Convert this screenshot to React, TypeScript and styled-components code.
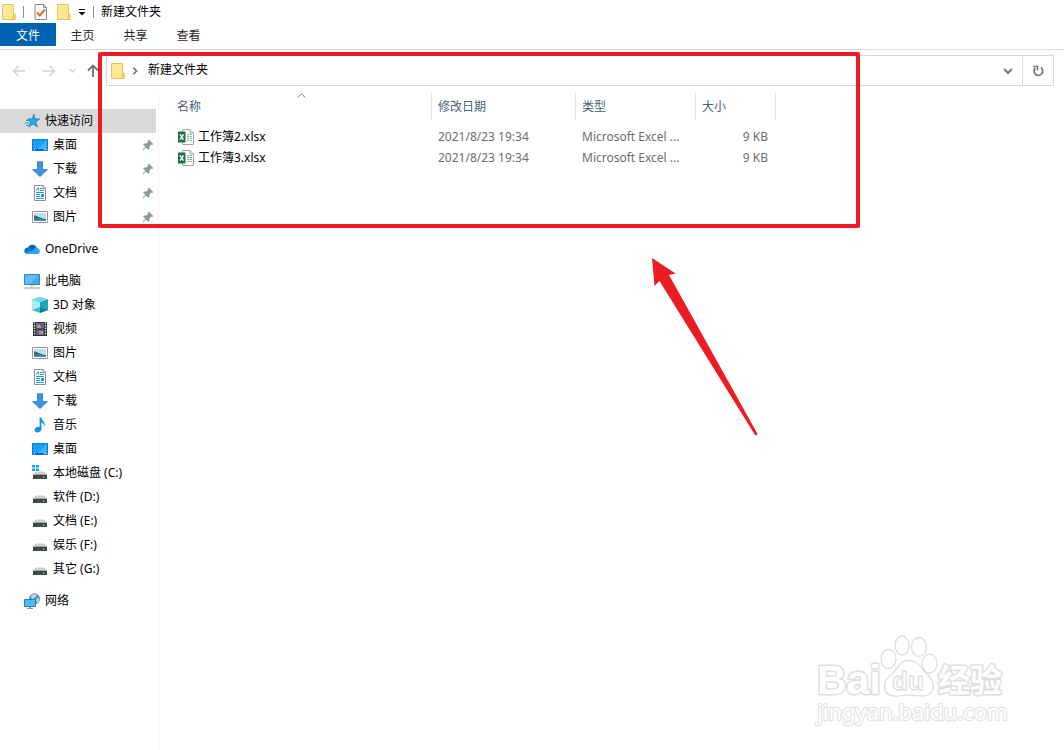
import React from "react";
import styled, { createGlobalStyle } from "styled-components";

const GlobalStyle = createGlobalStyle`
  * { box-sizing: border-box; }
  body {
    margin: 0;
    background: #fff;
    color: #000;
    font-family: "Noto Sans", "Noto Sans CJK SC", sans-serif;
    font-size: 12px;
    line-height: 16px;
  }
  button {
    font: inherit;
    color: inherit;
    border: 0;
    padding: 0;
    background: transparent;
  }
`;

const Page = styled.div`
  position: relative;
  min-height: 100vh;
  display: flex;
  flex-direction: column;
  overflow: hidden;
`;

const TitleBar = styled.header`
  display: flex;
  align-items: center;
  height: 23px;
  padding-left: 1px;
`;

const QuickButton = styled.button<{ $width: number }>`
  display: flex;
  align-items: center;
  justify-content: center;
  width: ${(p) => p.$width}px;
  height: 23px;
`;

const Divider = styled.span<{ $before: number; $after: number }>`
  width: 1px;
  height: 12px;
  margin: 0 ${(p) => p.$after}px 0 ${(p) => p.$before}px;
  background: #8c8c8c;
`;

const WindowTitle = styled.h1`
  margin: 0;
  font-size: 12px;
  font-weight: 400;
`;

const Ribbon = styled.nav`
  display: flex;
  height: 27px;
  border-bottom: 1px solid #dadbdc;
`;

const RibbonTab = styled.button<{ $primary?: boolean }>`
  width: ${(p) => (p.$primary ? 56 : 53)}px;
  height: 23px;
  padding-top: 2px;
  background: ${(p) => (p.$primary ? "#0063b1" : "transparent")};
  color: ${(p) => (p.$primary ? "#fff" : "#262626")};
`;

const AddressRow = styled.div`
  display: flex;
  align-items: center;
  padding: 5px 10px 0 4px;
`;

const NavButton = styled.button<{ $width: number }>`
  display: flex;
  align-items: center;
  justify-content: center;
  width: ${(p) => p.$width}px;
  height: 31px;
`;

const AddressBar = styled.div`
  display: flex;
  flex: 1;
  align-items: center;
  height: 31px;
  border: 1px solid #d9d9d9;
`;

const Crumbs = styled.div`
  display: flex;
  flex: 1;
  align-items: center;
  padding-left: 4px;
`;

const CrumbChevron = styled.span`
  display: flex;
  justify-content: center;
  width: 20px;
`;

const CrumbButton = styled.button`
  height: 29px;
  padding: 0 3px 1px 3px;
`;

const BarButton = styled.button<{ $bordered?: boolean }>`
  display: flex;
  align-items: center;
  justify-content: center;
  width: ${(p) => (p.$bordered ? 31 : 28)}px;
  height: 29px;
  border-left: ${(p) => (p.$bordered ? "1px solid #d9d9d9" : "0")};
`;

const Body = styled.div`
  display: flex;
  flex: 1;
  padding-top: 7px;
`;

const Sidebar = styled.nav`
  display: flex;
  flex-direction: column;
  gap: 8px;
  width: 159px;
  padding: 16px 2px 0 0;
  border-right: 1px solid #f3f3f3;
`;

const Group = styled.ul`
  margin: 0;
  padding: 0;
  list-style: none;
`;

const SideLink = styled.a<{ $level: number; $selected?: boolean }>`
  display: flex;
  align-items: center;
  gap: 5px;
  height: 24px;
  padding: 0 2px 0 ${(p) => (p.$level ? 32 : 24)}px;
  background: ${(p) => (p.$selected ? "#d9d9d9" : "transparent")};
  color: #000;
  text-decoration: none;
  white-space: nowrap;
`;

const SideLabel = styled.span`
  flex: 1;
`;

const Content = styled.main`
  flex: 1;
  min-width: 0;
  padding-left: 12px;
`;

const FileTable = styled.table`
  table-layout: fixed;
  width: 605px;
  border-collapse: separate;
  border-spacing: 0;
`;

const HeadCell = styled.th<{ $width: number }>`
  position: relative;
  width: ${(p) => p.$width}px;
  height: 27px;
  padding: 0 6px;
  border-right: 1px solid #e5e5e5;
  color: #4c607a;
  font-weight: 400;
  text-align: left;
`;

const SortMark = styled.span`
  position: absolute;
  top: -2px;
  left: 0;
  right: 0;
  display: flex;
  justify-content: center;
`;

const Cell = styled.td<{ $right?: boolean }>`
  height: 21px;
  padding: 0 8px 0 6px;
  color: #6d6d6d;
  text-align: ${(p) => (p.$right ? "right" : "left")};
  white-space: nowrap;
`;

const Spacer = styled.tbody`
  td { height: 6px; padding: 0; }
`;

const FileName = styled.a`
  display: flex;
  align-items: center;
  gap: 4px;
  padding-left: 1px;
  color: #000;
  text-decoration: none;
`;

const HighlightBox = styled.div`
  position: absolute;
  left: 98px;
  top: 52px;
  width: 762px;
  height: 176px;
  border: 4px solid #ed1c24;
  border-radius: 2px;
  pointer-events: none;
`;

const ArrowMark = styled.svg`
  position: absolute;
  left: 652px;
  top: 258px;
  pointer-events: none;
`;

const Watermark = styled.svg`
  position: absolute;
  right: 50px;
  bottom: 18px;
  pointer-events: none;
`;

const FolderIcon = () => (
  <svg width="14" height="16" viewBox="0 0 14 16" aria-hidden="true">
    <path d="M.5.5h11v9.5h1.5v5.500H.5z" fill="#ffe794" stroke="#e8c55a" />
    <path d="M11.500 10.500 10.500 15.500h2.500v-5z" fill="#f9d96f" stroke="#dfb743" strokeWidth=".7" />
  </svg>
);

const CheckPageIcon = () => (
  <svg width="14" height="16" viewBox="0 0 14 16" aria-hidden="true">
    <path d="M1 .5h8.500l3 3v12H1z" fill="#f8f9fa" stroke="#858a8e" />
    <path d="M9.500.500v3h3" fill="none" stroke="#858a8e" />
    <path d="M3 8.500 5.700 11.500 11 5.500" fill="none" stroke="#e8682c" strokeWidth="1.900" />
  </svg>
);

const CustomizeIcon = () => (
  <svg width="8" height="8" viewBox="0 0 8 8" aria-hidden="true">
    <path d="M1 1.500h6" stroke="#111" />
    <path d="M.5 4h7L4 7.500z" fill="#111" />
  </svg>
);

const ArrowIcon = ({ dir }: { dir: "left" | "right" | "up" }) => {
  const turn = { left: 0, right: 180, up: 90 }[dir];
  const up = dir === "up";
  return (
    <svg width="14" height="14" viewBox="0 0 14 14" aria-hidden="true">
      <path
        d="M13 7H1.800M6.500 2 1.500 7l5 5"
        transform={`rotate(${turn} 7 7)`}
        fill="none"
        stroke={up ? "#707070" : "#d2d2d2"}
        strokeWidth={up ? 1.800 : 1.500}
      />
    </svg>
  );
};

const Chevron = ({ d, color, size, weight }: { d: string; color: string; size: number; weight: number }) => (
  <svg width={size} height={size} viewBox="0 0 10 10" aria-hidden="true">
    <path d={d} fill="none" stroke={color} strokeWidth={weight} />
  </svg>
);
const DOWN = "M1 3l4 4 4-4";

const RefreshIcon = () => (
  <svg width="12" height="12" viewBox="0 0 12 12" aria-hidden="true">
    <path d="M8.900 2.600A4.300 4.300 0 1 1 3.300 3.100" fill="none" stroke="#777" strokeWidth="1.800" />
    <path d="M1.200 1.500h4.300v4" fill="none" stroke="#777" strokeWidth="1.600" />
  </svg>
);

const PinIcon = () => (
  <svg width="12" height="12" viewBox="0 0 12 12" aria-hidden="true">
    <path
      d="M7 .8 11.200 5l-1 .9-.8-.3L7.300 7.700l.1 2-1 1L4 8.400 1.300 11l-.6-.500L3.300 7.600 1 5.400l1-.9 2.200.1 2-2-.2-.9z"
      fill="#8a979f"
    />
  </svg>
);

const ExcelIcon = () => (
  <svg width="16" height="16" viewBox="0 0 16 16" aria-hidden="true">
    <path d="M4.500.500h7.500l3.500 3.500v11.500h-11z" fill="#fff" stroke="#a6a6a6" />
    <path d="M12 .5V4h3.500" fill="none" stroke="#a6a6a6" />
    <path d="M9 5.500h2M12 5.500h2M9 7.500h2M12 7.500h2M9 9.500h2M12 9.500h2M9 11.500h2M12 11.500h2" stroke="#7fb896" />
    <path d="M0 2.500h7.500v11H0z" fill="#1e7145" />
    <path d="M2 5.300 5.500 10.700M5.500 5.300 2 10.700" stroke="#fff" strokeWidth="1.400" />
  </svg>
);

type IconName =
  | "star" | "desktop" | "download" | "document" | "picture" | "cloud" | "pc"
  | "cube" | "video" | "music" | "system" | "drive" | "network";

const drivePaths = (
  <>
    <path d="M3.500 6.500h9L14.500 10H1.500z" fill="#cfd2d5" />
    <path d="M1 10h14v4H1z" fill="#414447" />
    <path d="M1 9.500h14" stroke="#a5a8aa" />
    <path d="M11 11.500h1.500v1.500H11z" fill="#53e04b" />
  </>
);

const glyphs: Record<IconName, React.ReactNode> = {
  star: (
    <>
      <path d="m9.800 1.300 1.300 4.500 4.600.2-3.800 2.900 1.400 5-4.200-2.800-4.300 3 1.600-5L3.500 6l4.700-.2z" fill="#28a5ee" stroke="#2583bd" strokeWidth=".8" />
      <path d="M2 7.500h3M.5 10h4.500M2 12.500h2.500" stroke="#2e8fcc" />
    </>
  ),
  desktop: (
    <>
      <path d="M.5 2.500h15v11H.5z" fill="#18a0fb" stroke="#0b78c9" />
      <path d="M6 12 14.500 3v9z" fill="#3fb3ff" />
      <path d="M1 12.500h14" stroke="#0a5e9d" />
      <path d="M2 12.500h1M12 12.500h1M13.500 12.500h1" stroke="#fff" />
    </>
  ),
  download: <path d="M5.500.8h5v7.700h5L8 15.500.5 8.500h5z" fill="#3d94de" stroke="#2779bf" strokeWidth=".8" />,
  document: (
    <>
      <path d="M2.500.5H11L13.500 3v12.500h-11z" fill="#fff" stroke="#8f8f8f" />
      <path d="M11 .5V3.500h2.500" fill="none" stroke="#8f8f8f" />
      <path d="M4 5.700 6 2.700l1 3M8 3.500h2.500M8 5.500h4M4 7.500h8M4 9.500h4M4 11.500h4M4 13.500h8" fill="none" stroke="#1f93e0" />
      <path d="M9 9h3v3H9z" fill="#3f8fc4" />
    </>
  ),
  picture: (
    <>
      <path d="M.5 2.500h15v11H.5z" fill="#fff" stroke="#999" />
      <path d="M2 4h12v8H2z" fill="#b9e2fa" />
      <path d="M2 6.500c3-.5 5 2.500 12 3.500v2H2z" fill="#3f6f73" />
      <path d="M2 11c4-1.500 8-.5 12-.5V12H2z" fill="#4b8fd0" />
    </>
  ),
  cloud: (
    <>
      <path d="M4 7a4.600 4.600 0 0 1 8.700-.2l-5 5z" fill="#0864b5" />
      <path d="M2.800 13A3.300 3.300 0 0 1 4.500 6.600c2.500.2 4 1.600 6 3L8 13z" fill="#1172c8" />
      <path d="M9 9.500A3.400 3.400 0 0 1 15.700 11c0 1.200-.8 2-2 2H3Q2 13 1.300 12z" fill="#2aa7ea" />
    </>
  ),
  pc: (
    <>
      <path d="M.5 1.500h15v10H.5z" fill="#5bc0fd" stroke="#477ca2" />
      <path d="M6 11 13.500 2H15v9z" fill="#40adf2" />
      <path d="M6 12h4v2H6z" fill="#d9e2e8" />
      <path d="M0 15h16" stroke="#8799a8" />
    </>
  ),
  cube: (
    <>
      <path d="M8 0 16 2.500v10.500L8 16 0 13V2.500z" fill="#37c3d6" />
      <path d="M0 2.500 8 0l8 2.500L8 5.500z" fill="#6fdbe6" />
      <path d="M0 2.500l8 3V10l-8 3z" fill="#a9ecf0" />
      <path d="M8 5.500l8-3V13L8 10z" fill="#1fa5ba" />
      <path d="M8 10l8 3-8 3z" fill="#0b7f94" />
    </>
  ),
  video: (
    <>
      <path d="M1 1h14v14H1z" fill="#343434" />
      <path d="M4 2h8v5.500H4z" fill="#3f72c7" />
      <path d="M4 8.500h8V14H4z" fill="#3b68b9" />
      <path d="M5 4h4v3H5zM7 10h4v3H7z" fill="#d99437" />
      <path d="M8 3h3v2H8zM5 10h2v2H5z" fill="#a94245" />
      <path d="M2.500 1.500v13M13.500 1.500v13" stroke="#fff" strokeWidth="1.200" strokeDasharray="1.300 1.300" />
    </>
  ),
  music: (
    <>
      <path d="M8.500 1v11" stroke="#0993ec" strokeWidth="1.800" />
      <path d="M7.600.5h1.800C9.500 4 14.500 5 12.200 10c0-3-1.500-4-2.800-4.500z" fill="#0993ec" />
      <ellipse cx="6" cy="12.600" rx="3.400" ry="2.700" fill="#0993ec" transform="rotate(-15 6 12.600)" />
    </>
  ),
  system: (
    <>
      {drivePaths}
      <path d="M0 0h3v2.500H0zM4 0h3v2.500H4zM0 3.500h3V6H0zM4 3.500h3V6H4z" fill="#12a8ee" />
    </>
  ),
  drive: drivePaths,
  network: (
    <>
      <circle cx="10.500" cy="5.800" r="5.500" fill="#4f93b9" />
      <path d="M7 3c2-2.500 5-2 5.500-.5S10 4 9.500 6 7 5 7 3zM12 6l3-1c.5 2-.5 4-2 5z" fill="#b9dceb" />
      <path d="M.5 6.500h11v7H.5z" fill="#4abafa" stroke="#2d7db4" />
      <path d="M5 14h2v1H5zM3 15h6v1H3z" fill="#849bac" />
    </>
  ),
};

const SideIcon = ({ name }: { name: IconName }) => (
  <svg width="16" height="16" viewBox="0 0 16 16" aria-hidden="true">{glyphs[name]}</svg>
);

type SideItem = { label: string; icon: IconName; level: number; pinned?: boolean; selected?: boolean };

const groups: SideItem[][] = [
  [
    { label: "快速访问", icon: "star", level: 0, selected: true },
    { label: "桌面", icon: "desktop", level: 1, pinned: true },
    { label: "下载", icon: "download", level: 1, pinned: true },
    { label: "文档", icon: "document", level: 1, pinned: true },
    { label: "图片", icon: "picture", level: 1, pinned: true },
  ],
  [{ label: "OneDrive", icon: "cloud", level: 0 }],
  [
    { label: "此电脑", icon: "pc", level: 0 },
    { label: "3D 对象", icon: "cube", level: 1 },
    { label: "视频", icon: "video", level: 1 },
    { label: "图片", icon: "picture", level: 1 },
    { label: "文档", icon: "document", level: 1 },
    { label: "下载", icon: "download", level: 1 },
    { label: "音乐", icon: "music", level: 1 },
    { label: "桌面", icon: "desktop", level: 1 },
    { label: "本地磁盘 (C:)", icon: "system", level: 1 },
    { label: "软件 (D:)", icon: "drive", level: 1 },
    { label: "文档 (E:)", icon: "drive", level: 1 },
    { label: "娱乐 (F:)", icon: "drive", level: 1 },
    { label: "其它 (G:)", icon: "drive", level: 1 },
  ],
  [{ label: "网络", icon: "network", level: 0 }],
];

const columns = [
  { title: "名称", width: 261, sorted: true },
  { title: "修改日期", width: 144 },
  { title: "类型", width: 120 },
  { title: "大小", width: 80 },
];

const files = [
  { name: "工作簿2.xlsx", date: "2021/8/23 19:34", type: "Microsoft Excel ...", size: "9 KB" },
  { name: "工作簿3.xlsx", date: "2021/8/23 19:34", type: "Microsoft Excel ...", size: "9 KB" },
];

export default function App() {
  return (
    <Page>
      <GlobalStyle />
      <TitleBar>
        <QuickButton $width={15} aria-label="窗口菜单"><FolderIcon /></QuickButton>
        <Divider $before={7} $after={7} />
        <QuickButton $width={20} aria-label="属性"><CheckPageIcon /></QuickButton>
        <QuickButton $width={25} aria-label="新建文件夹"><FolderIcon /></QuickButton>
        <QuickButton $width={11} aria-label="自定义快速访问工具栏"><CustomizeIcon /></QuickButton>
        <Divider $before={6} $after={7} />
        <WindowTitle>新建文件夹</WindowTitle>
      </TitleBar>

      <Ribbon>
        <RibbonTab $primary>文件</RibbonTab>
        <RibbonTab>主页</RibbonTab>
        <RibbonTab>共享</RibbonTab>
        <RibbonTab>查看</RibbonTab>
      </Ribbon>

      <AddressRow>
        <NavButton $width={30} aria-label="后退"><ArrowIcon dir="left" /></NavButton>
        <NavButton $width={30} aria-label="前进"><ArrowIcon dir="right" /></NavButton>
        <NavButton $width={16} aria-label="最近的位置"><Chevron d={DOWN} color="#d2d2d2" size={7} weight={2} /></NavButton>
        <NavButton $width={26} aria-label="向上"><ArrowIcon dir="up" /></NavButton>
        <AddressBar>
          <Crumbs>
            <FolderIcon />
            <CrumbChevron><Chevron d="M3 1l4 4-4 4" color="#707070" size={8} weight={2} /></CrumbChevron>
            <CrumbButton>新建文件夹</CrumbButton>
          </Crumbs>
          <BarButton aria-label="以前的位置"><Chevron d={DOWN} color="#777" size={10} weight={2} /></BarButton>
          <BarButton $bordered aria-label="刷新"><RefreshIcon /></BarButton>
        </AddressBar>
      </AddressRow>

      <Body>
        <Sidebar>
          {groups.map((group, g) => (
            <Group key={g}>
              {group.map((item) => (
                <li key={item.label}>
                  <SideLink href="#" $level={item.level} $selected={item.selected}>
                    <SideIcon name={item.icon} />
                    <SideLabel>{item.label}</SideLabel>
                    {item.pinned && <PinIcon />}
                  </SideLink>
                </li>
              ))}
            </Group>
          ))}
        </Sidebar>

        <Content>
          <FileTable>
            <thead>
              <tr>
                {columns.map((c) => (
                  <HeadCell key={c.title} $width={c.width} scope="col">
                    {c.title}
                    {c.sorted && (
                      <SortMark><Chevron d="M1 7l4-4 4 4" color="#666" size={9} weight={1} /></SortMark>
                    )}
                  </HeadCell>
                ))}
              </tr>
            </thead>
            <Spacer aria-hidden="true">
              <tr><td colSpan={4} /></tr>
            </Spacer>
            <tbody>
              {files.map((f) => (
                <tr key={f.name}>
                  <Cell><FileName href="#"><ExcelIcon />{f.name}</FileName></Cell>
                  <Cell>{f.date}</Cell>
                  <Cell>{f.type}</Cell>
                  <Cell $right>{f.size}</Cell>
                </tr>
              ))}
            </tbody>
          </FileTable>
        </Content>
      </Body>

      <HighlightBox />
      <ArrowMark width="107" height="179" viewBox="0 0 107 179" aria-hidden="true">
        <path d="M0 0 23.500 15.500 17 17 105.300 175.500Q105.500 178 103 177L7.500 23 2.500 28z" fill="#ed1c24" />
      </ArrowMark>

      <Watermark width="200" height="100" viewBox="0 0 200 100">
        <g fill="#fff" stroke="#dedede" strokeWidth="1.300" strokeLinejoin="round">
          <g paintOrder="stroke" strokeWidth="3">
            <text x="3" y="62" fontFamily="Liberation Sans, sans-serif" fontWeight="700" fontSize="41">Bai</text>
            <text x="124" y="60" fontFamily="Noto Sans CJK SC, sans-serif" fontWeight="700" fontSize="32">经验</text>
          </g>
          <ellipse cx="74.500" cy="27" rx="7.500" ry="9.500" />
          <ellipse cx="88" cy="13.500" rx="7" ry="9.500" />
          <ellipse cx="105" cy="15" rx="7.500" ry="9.500" />
          <ellipse cx="115.500" cy="31.500" rx="7.500" ry="9.500" />
          <path d="M94 28.500C104 28 107 36 112 41C118 46 121 53 118 59C113 67 104 63 95 63C86 63 77 67 72 60C69 54 71 47 77 43C84 37 85 29 94 28.500z" />
          <text x="78" y="58" fontFamily="Liberation Sans, sans-serif" fontWeight="700" fontSize="26">du</text>
          <text x="3" y="88" fontFamily="Noto Sans, sans-serif" fontSize="22" paintOrder="stroke" stroke="#e4e4e4" strokeWidth="2.500">jingyan.baidu.com</text>
        </g>
      </Watermark>
    </Page>
  );
}
